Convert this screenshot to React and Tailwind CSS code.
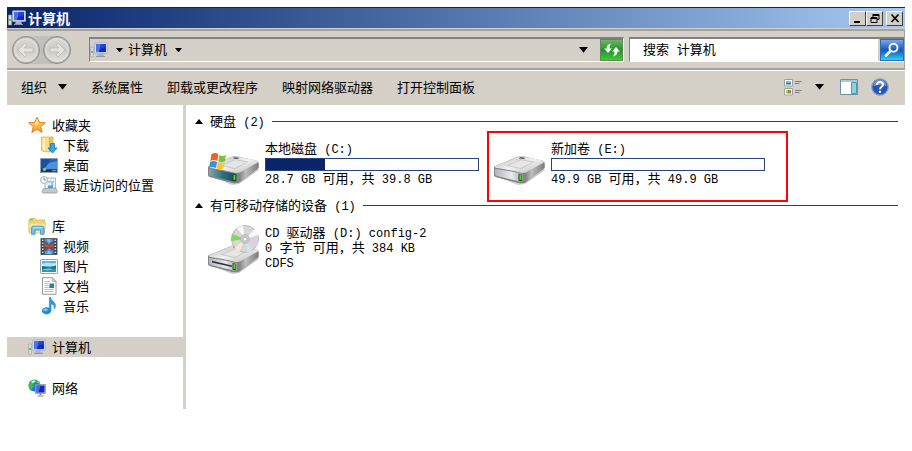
import { Fragment } from 'react';

const favorites = [
  { label: '下载', icon: DownloadsIcon },
  { label: '桌面', icon: DesktopIcon },
  { label: '最近访问的位置', icon: RecentIcon },
];

const libraries = [
  { label: '视频', icon: VideoIcon },
  { label: '图片', icon: PictureIcon },
  { label: '文档', icon: DocumentIcon },
  { label: '音乐', icon: MusicIcon },
];

const groups = [
  { label: '收藏夹', icon: StarIcon, items: favorites },
  { label: '库', icon: LibraryIcon, items: libraries },
  { label: '计算机', icon: ComputerIcon, items: [], selected: true },
  { label: '网络', icon: NetworkIcon, items: [] },
];

const commands = ['系统属性', '卸载或更改程序', '映射网络驱动器', '打开控制面板'];

const disks = [
  { name: '本地磁盘 (C:)', info: '28.7 GB 可用，共 39.8 GB', free: 28.7, total: 39.8, system: true },
  { name: '新加卷 (E:)', info: '49.9 GB 可用，共 49.9 GB', free: 49.9, total: 49.9, marked: true },
];

// Latin runs are set in a narrower mono face next to the CJK glyphs
function Mixed({ children }) {
  return children.split(/([\x20-\x7e]+)/).map((part, i) =>
    i % 2 ? (
      <span key={i} className="font-['Liberation_Mono',monospace] text-[12px] leading-none whitespace-pre">{part}</span>
    ) : (
      <Fragment key={i}>{part}</Fragment>
    )
  );
}

function Caret({ className = 'w-[8px]' }) {
  return (
    <svg viewBox="0 0 8 5" className={className} aria-hidden="true">
      <path d="M0 0h8L4 5z" fill="#000" />
    </svg>
  );
}

function ComputerIcon() {
  return (
    <svg viewBox="0 0 18 16" className="w-[18px] h-[16px]" aria-hidden="true">
      <rect x="0.5" y="5" width="3" height="10" rx="0.5" fill="#d7dbdb" stroke="#9aa0a0" strokeWidth=".6" />
      <rect x="1.2" y="9" width="1.6" height="2" fill="#39c22e" />
      <path d="M8 11h5l1 3H7z" fill="#a9b4c0" />
      <path d="M6 14h9v1H6z" fill="#8c98a5" />
      <rect x="4.5" y="0.8" width="13" height="10.7" rx="0.6" fill="#cfd8e4" stroke="#a9b3c0" strokeWidth=".7" />
      <rect x="6" y="2.1" width="10" height="8" fill="#1527bd" />
      <path d="M6 2.1h5L9 10.1H6z" fill="#4d72ee" />
      <path d="M11 2.1h5v3l-6 2z" fill="#2342d8" />
    </svg>
  );
}

function NetworkIcon() {
  return (
    <svg viewBox="0 0 18 18" className="w-[18px] h-[18px]" aria-hidden="true">
      <circle cx="6.5" cy="6.5" r="6" fill="#2577d8" />
      <path d="M1 5c1-3 3-4 6-4l1 2-3 2 1 2-2 2-1 3C1 10 .5 8 1 5z" fill="#3fbd42" />
      <path d="M8 1c2 .5 4 2 4 4L9 4z" fill="#62cf4d" />
      <path d="M3 3c2-2 4-1.500 5-1L5 4z" fill="#d9f7ff" />
      <path d="M11.500 14h2v2h-2zM9.500 16.500h6v1h-6z" fill="#6c87a8" />
      <rect x="7.500" y="5.500" width="10" height="9" fill="#b5c7de" stroke="#7c93b3" strokeWidth=".7" />
      <rect x="8.500" y="6.500" width="8" height="7" fill="#1428bd" />
      <path d="M8.500 6.500h4l-2 7h-2z" fill="#496fe8" />
    </svg>
  );
}

function StarIcon() {
  return (
    <svg viewBox="0 0 18 18" className="w-[18px] h-[18px]" aria-hidden="true">
      <defs>
        <linearGradient id="star" x1="0" y1="0" x2="0" y2="1">
          <stop offset="0" stopColor="#fff06a" />
          <stop offset="1" stopColor="#f7941f" />
        </linearGradient>
      </defs>
      <path d="M9 1l2.300 5.300 6 .5-4.600 3.800 1.500 5.900L9 13.400l-5.200 3.100 1.500-5.900L.7 6.800l6-.5z" fill="url(#star)" stroke="#e8812c" strokeWidth="1" strokeLinejoin="round" />
      <path d="M9 3l1.300 4.200L9 9 5 7.500 7.500 7z" fill="#fff7a0" opacity=".8" />
    </svg>
  );
}

function DownloadsIcon() {
  return (
    <svg viewBox="0 0 18 18" className="w-[18px] h-[18px]" aria-hidden="true">
      <path d="M1.500 1h8v15l-8-1z" fill="#f6dd86" stroke="#d9b75a" strokeWidth=".8" />
      <path d="M9.500 1H13v12l-3.500 3z" fill="#ecc766" stroke="#d0a94b" strokeWidth=".8" />
      <path d="M3 2h2v12.500l-2-.3z" fill="#fff1b8" />
      <path d="M10.500 7.500h4V12h2.500l-4.500 5-4.500-5h2.500z" fill="#3da4e8" stroke="#1b70bb" strokeWidth=".8" />
    </svg>
  );
}

function DesktopIcon() {
  return (
    <svg viewBox="0 0 18 15" className="w-[18px] h-[15px]" aria-hidden="true">
      <rect x=".5" y=".5" width="17" height="14" fill="#2563b8" stroke="#8ea2bb" />
      <path d="M1 1h10L5 11H1z" fill="#1d4e9f" />
      <path d="M9 5l8-2v8H4z" fill="#4a93dd" />
      <path d="M1 11.500h16V14H1z" fill="#263244" />
      <path d="M12 12h4.500v1.300H12z" fill="#8492a4" />
      <circle cx="4.500" cy="11.500" r="1.700" fill="#54bd7a" />
      <circle cx="4.500" cy="11.300" r=".8" fill="#f5d54b" />
    </svg>
  );
}

function RecentIcon() {
  return (
    <svg viewBox="0 0 18 18" className="w-[18px] h-[18px]" aria-hidden="true">
      <rect x="5" y="2" width="10.500" height="11" fill="#e8edf1" stroke="#a4afb8" strokeWidth=".8" />
      <path d="M7 5h7v1.500H7zM11 6h2v5h-2z" fill="#93c8e8" />
      <path d="M8 9.500h5V12H8z" fill="#4aa2dc" />
      <path d="M3.500 12.500l12-.5 2 3.500-1 1.500H3l-1-1.500z" fill="#c4cace" stroke="#939a9f" strokeWidth=".8" />
      <circle cx="4" cy="4" r="3.500" fill="#f5f7f8" stroke="#a1acb4" strokeWidth=".9" />
      <path d="M4 1.700V4h2" stroke="#697b89" strokeWidth=".8" fill="none" />
    </svg>
  );
}

function LibraryIcon() {
  return (
    <svg viewBox="0 0 18 17" className="w-[18px] h-[17px]" aria-hidden="true">
      <path d="M1 2l1-1.500h5L8 2h8.500v12H1z" fill="#f1d678" stroke="#d6b155" strokeWidth=".8" />
      <path d="M2 1.500h3v1H2z" fill="#6cc04a" />
      <path d="M.8 5h16.700L16.500 15h-15z" fill="#fae7a2" stroke="#dfc06a" strokeWidth=".7" />
      <path d="M3.500 16.300V10q0-1.800 1.800-1.800h8.900Q16 8.200 16 10v6.300h-3.500V12H7v4.300z" fill="#72c3ea" stroke="#398fca" strokeWidth=".8" />
      <path d="M5 9.300h9.500v1H5z" fill="#c9eefa" />
    </svg>
  );
}

function VideoIcon() {
  return (
    <svg viewBox="0 0 17 17" className="w-[18px] h-[17px]" aria-hidden="true">
      <rect x=".5" y=".5" width="16" height="16" fill="#29363d" stroke="#53656d" />
      <rect x="4" y="1.200" width="9" height="14.800" fill="#4d97cc" />
      <path d="M4 3q3 1 4.500 4Q10 4 13 3v10q-3-1-4.500-3Q7 13 4 13z" fill="#7a4650" />
      <path d="M4 5q3 1.500 4.500 3.500Q10 6 13 5.500v3L8.500 9.500 4 8z" fill="#c0503c" />
      <path d="M6 1.200h5L8.500 5zM6 16l2.500-4 2.500 4z" fill="#7cc5ed" />
      <path d="M2.300 1.500v15M14.700 1.500v15" stroke="#dfe8e8" strokeWidth="1.500" strokeDasharray="1.500 1.500" />
    </svg>
  );
}

function PictureIcon() {
  return (
    <svg viewBox="0 0 18 15" className="w-[18px] h-[15px]" aria-hidden="true">
      <rect x=".5" y=".5" width="17" height="14" rx=".6" fill="#fbfbfb" stroke="#98a4aa" />
      <rect x="2" y="2" width="14" height="11" fill="#53b2ec" />
      <path d="M2 5c5-3 8 0 14-1v3H2z" fill="#b5e6fb" />
      <path d="M2 7l4 1 4 .5 6-2V10H2z" fill="#286f4b" />
      <path d="M2 9.500h14V13H2z" fill="#2e91c2" />
      <path d="M2 10.500l7-1 4 1-6 1z" fill="#74cbd1" />
    </svg>
  );
}

function DocumentIcon() {
  return (
    <svg viewBox="0 0 18 18" className="w-[18px] h-[18px]" aria-hidden="true">
      <path d="M2.500.7h9.800l3.700 3.700v12.900H2.500z" fill="#fdfdfd" stroke="#949ca1" />
      <path d="M12.300.7v3.700H16z" fill="#d4dbe0" stroke="#949ca1" strokeWidth=".7" />
      <path d="M4.500 4.500H10M4.500 6.500h4M4.500 8.500h4M4.500 10.500h4M4.500 12.500h9M4.500 14.500h9" stroke="#a6b9cd" strokeWidth=".9" />
      <rect x="9.500" y="6.500" width="4.500" height="4.500" fill="#2c78bf" />
      <path d="M9.500 9.500l4.500-1V11H9.500z" fill="#328767" />
    </svg>
  );
}

function MusicIcon() {
  return (
    <svg viewBox="0 0 18 18" className="w-[18px] h-[18px]" aria-hidden="true">
      <ellipse cx="6.500" cy="13.800" rx="4.600" ry="3.600" fill="#238bd5" />
      <ellipse cx="5.500" cy="12.800" rx="2.400" ry="1.500" fill="#72c5f4" />
      <path d="M9.300 14V.5h1.500c.3 3.500 5.500 4.500 4.700 9-.2 1.200-.8 2-1.500 2.500 1-3-.8-4.500-2.900-5V14z" fill="#2f97dd" stroke="#1b77bd" strokeWidth=".4" />
    </svg>
  );
}

function DriveBody({ y = 0, slot, system }) {
  return (
    <g transform={`translate(0 ${y})`}>
      <path d="M3 21l22 9 7-1 20-14-2-2z" fill="#000" opacity=".2" />
      <path d="M1 11.500L24 2q3-1 7-.5l18 4q2.500.5 2.500 2.500v5L33 27q-3 2-7 1L3 22q-2-.5-2-3z" fill="#8d8d8d" />
      <path d="M30 17.500L51.500 7.500V13L32.500 27.200l-2.500.6z" fill="url(#driveSide)" />
      <path d="M1.500 11.500L24 2q3-1 7-.5l18.500 4q2.500 1 .5 2.500L33 17.500q-3 1.200-7 .3L3 13z" fill="url(#driveTop)" />
      <path d="M13 10.500l15-6.500 14 2.500-14 8z" fill="#cbcbcb" />
      <path d="M16 10.200l12-4.900 11.500 2L27.500 13z" fill="#e6e6e6" />
      <path d="M27 2.200l5.500.5-2 1.400-4.500-.5z" fill="#535353" />
      <path d="M1 12.700q13 1.300 28 5.300l3-.3v9.600q-3 1.400-6 .7L3 22q-2-.5-2-2.500z" fill="#858585" />
      <path d="M2 14q13 1.300 27.500 5v7.300q-1.500.6-4 0L4 21q-2-.5-2-2.500z" fill={system ? 'url(#glassFront)' : 'url(#driveFront)'} />
      {slot && <path d="M5 16.800l20 4.700v1.500L5 18.500z" fill="#30343c" />}
      <path d="M25.500 19l3.300.8v6.500l-3.300-.5z" fill="#234b1e" />
      <path d="M26.500 19.800l1.800.4V25l-1.800-.3z" fill="#4be323" />
    </g>
  );
}

function DriveDefs() {
  return (
    <defs>
      <linearGradient id="driveTop" x1="0" y1="0" x2="1" y2="1">
        <stop offset="0" stopColor="#b0b0b0" />
        <stop offset=".5" stopColor="#f2f2f2" />
        <stop offset="1" stopColor="#b5b5b5" />
      </linearGradient>
      <linearGradient id="driveSide" x1="0" y1="0" x2="1" y2="0">
        <stop offset="0" stopColor="#6c6c6c" />
        <stop offset=".4" stopColor="#bdbdbd" />
        <stop offset="1" stopColor="#7c7c7c" />
      </linearGradient>
      <linearGradient id="driveFront" x1="0" y1="0" x2="1" y2="0">
        <stop offset="0" stopColor="#b2b5bb" />
        <stop offset=".6" stopColor="#e9eaf0" />
        <stop offset="1" stopColor="#a6a9ae" />
      </linearGradient>
      <linearGradient id="glassFront" x1="0" y1="0" x2="1" y2="0">
        <stop offset="0" stopColor="#87a5ab" />
        <stop offset=".5" stopColor="#2d7080" />
        <stop offset="1" stopColor="#164958" />
      </linearGradient>
    </defs>
  );
}

function DiskIcon({ system }) {
  return (
    <svg viewBox="0 0 52 32" className="w-[52px] h-[32px]" aria-hidden="true">
      <DriveDefs />
      <DriveBody y={2} system={system} />
      {system && (
        <g>
          <path d="M4.500 1q4-2 7 .3L10.300 8Q7 6 3.300 8z" fill="#ec6328" />
          <path d="M12.500 2q3 2 6.500 0l-1.200 6.200q-3.500 2-6.500 0z" fill="#7cc043" />
          <path d="M3 9q3.800-2 7 0L8.800 15Q5.500 13 2 15z" fill="#3b92dc" />
          <path d="M11 9.200q3.200 2 6.600 0L16.400 15.500q-3.500 2-6.600 0z" fill="#fac62e" />
        </g>
      )}
    </svg>
  );
}

function OpticalIcon() {
  return (
    <svg viewBox="0 0 52 49" className="w-[52px] h-[49px]" aria-hidden="true">
      <DriveDefs />
      <DriveBody y={19} slot />
      <circle cx="38" cy="14" r="13.500" fill="#d6d6d6" stroke="#b0b0b0" strokeWidth=".8" />
      <path d="M38 14L25 9q-1 3-.8 7z" fill="#7fdc5a" />
      <path d="M38 14L30 2.800 36 .6z" fill="#f8f8f8" />
      <path d="M38 14L48 4q3 3 3.500 6z" fill="#f9f9f9" />
      <path d="M38 14l13.500 2q-.5 3-2 5z" fill="#e3c9ea" />
      <path d="M38 14l-10.500 9q2 2.500 5 4z" fill="#f3ebd0" />
      <path d="M38 14l2 13.500 5-1.500z" fill="#cfe5ef" />
      <circle cx="38" cy="14" r="4.500" fill="#c9c9c9" stroke="#adadad" strokeWidth=".6" />
      <circle cx="38" cy="14" r="2" fill="#fff" stroke="#9c9c9c" strokeWidth=".6" />
    </svg>
  );
}

function TravelButtons() {
  return (
    <div className="flex shrink-0 gap-[3px] rounded-full bg-[#c3c0b9]">
      {['后退', '前进'].map((label, i) => (
        <button key={label} aria-label={label} className="grid h-[28px] w-[28px] place-items-center rounded-full border border-[#8b8f91] bg-linear-to-b from-[#dcdad5] via-[#cdcbc5] to-[#e4e2dd] shadow-[inset_0_0_0_1px_#b4b5b3,inset_0_0_2px_2px_#e6e5e2]">
          <svg viewBox="0 0 18 16" className={i ? 'w-[18px] rotate-180' : 'w-[18px]'} aria-hidden="true">
            <path d="M8 1L1 8l7 7 2-2-3-3h9V6H7l3-3z" fill="#e4e3df" stroke="#bab8b3" strokeWidth=".8" />
          </svg>
        </button>
      ))}
    </div>
  );
}

function TitleButton({ label, children }) {
  return (
    <button aria-label={label} className="grid h-[15px] w-[17px] place-items-center border border-t-white border-l-white border-r-[#404040] border-b-[#404040] bg-[#d4d0c8]">
      <svg viewBox="0 0 12 11" className="h-[11px] w-[12px]" fill="none" stroke="#000" aria-hidden="true">{children}</svg>
    </button>
  );
}

function TitleBar() {
  return (
    <header className="flex h-[21px] items-center border-t border-[#20262f] bg-linear-to-r from-[#0a246a] to-[#a6caf0] pr-[2px] pl-px">
      <ComputerIcon />
      <h1 className="ml-[2px] text-[14px] font-bold text-white">计算机</h1>
      <div className="ml-auto flex">
        <TitleButton label="最小化"><path d="M2 9h6" strokeWidth="2" /></TitleButton>
        <TitleButton label="还原"><path d="M4 1.500h6v5H8M4 2.500h6M4 1v3M2 4.500h6v5H2zM2 5.500h6" /></TitleButton>
        <span className="w-[3px]" />
        <TitleButton label="关闭"><path d="M2.500 1.500l7 7.500M9.500 1.500l-7 7.500" strokeWidth="1.700" /></TitleButton>
      </div>
    </header>
  );
}

function AddressBar() {
  return (
    <div className="mt-px flex h-[41px] items-center border-t-2 border-r border-b-2 border-[#a3a3a3] pl-[5px]">
      <TravelButtons />
      <nav aria-label="地址" className="ml-[18px] flex h-[25px] flex-1 items-center border border-t-2 border-t-[#808080] border-r-white border-b-white border-l-[#808080]">
        <ComputerIcon />
        <button aria-label="根位置" className="pr-[5px] pl-[8px]"><Caret className="w-[7px]" /></button>
        <a href="#computer" className="pb-[2px]">计算机</a>
        <button aria-label="计算机位置" className="px-[8px]"><Caret className="w-[7px]" /></button>
        <button aria-label="以前的位置" className="ml-auto px-[12px]"><Caret className="w-[9px]" /></button>
        <button aria-label="刷新" className="grid h-[22px] w-[23px] place-items-center border border-[#5c8c55] bg-linear-to-b from-[#69b765] via-[#23922b] to-[#42cb35]">
          <svg viewBox="0 0 18 16" className="w-[18px]" aria-hidden="true">
            <path d="M8 1.500Q3.500 2.500 3.500 6.500H1L5 11l4-4.500H6.500Q6.300 4 8 1.500zM10 14.500q4.500-1 4.500-5H17L13 5 9 9.500h2.500q.2 2.500-1.500 5z" fill="#f3fff0" />
          </svg>
        </button>
      </nav>
      <form role="search" className="ml-[5px] flex h-[25px] w-[275px] items-center border border-r-0 border-t-2 border-[#808080] border-b-white" onSubmit={(e) => e.preventDefault()}>
        <input
          type="text"
          aria-label="搜索 计算机"
          placeholder="搜索 计算机"
          className="h-full min-w-0 flex-1 bg-white pl-[13px] font-['Liberation_Mono','Noto_Sans_CJK_SC',monospace] text-[13px] outline-none placeholder:text-black"
        />
        <button aria-label="搜索" className="ml-[2px] grid h-[22px] w-[24px] place-items-center border border-[#2f6db0] bg-linear-to-b from-[#77a8e6] via-[#1855bd] to-[#33d1f2]">
          <svg viewBox="0 0 16 16" className="w-[16px]" fill="none" stroke="#f4f8fc" aria-hidden="true">
            <circle cx="9.500" cy="5.800" r="4" strokeWidth="2" />
            <path d="M6.500 9L2 13.500" strokeWidth="2.800" strokeLinecap="round" />
          </svg>
        </button>
      </form>
    </div>
  );
}

function CommandBar() {
  return (
    <div role="toolbar" aria-label="命令" className="flex h-[35px] items-center border-t border-white pr-[16px] pb-[2px] pl-[14px]">
      <button className="mr-[24px] flex items-center gap-[11px]">组织<Caret className="w-[9px]" /></button>
      <div className="flex gap-[24px]">
        {commands.map((c) => <button key={c} className="whitespace-nowrap">{c}</button>)}
      </div>
      <div className="ml-auto flex items-center">
        <button aria-label="更改视图">
          <svg viewBox="0 0 18 17" className="w-[18px]" aria-hidden="true">
            <path d="M.5.500h8v6.500h-8zM.5 9.500h8V16h-8z" fill="#fff" stroke="#9aa2a8" />
            <path d="M2 2h5v2.500H2z" fill="#76bde2" />
            <path d="M2 4h5v1.500H2z" fill="#2d7b62" />
            <path d="M2 11h2v3.500H2z" fill="#e2b72a" />
            <path d="M4 11h1.500v3.500H4z" fill="#449e48" />
            <path d="M5.500 11H7v3.500H5.500z" fill="#b65a43" />
            <path d="M11 2.500h6.500M11 4.500h4.500M11 11.500h6.500M11 13.500h4.500" stroke="#78838e" />
          </svg>
        </button>
        <button aria-label="更多选项" className="pr-[16px] pl-[13px]"><Caret className="w-[9px]" /></button>
        <button aria-label="显示预览窗格">
          <svg viewBox="0 0 18 16" className="w-[18px]" aria-hidden="true">
            <path d="M.5.500h17v15H.5z" fill="#fff" stroke="#6b93a8" />
            <path d="M1 1h16v2H1z" fill="#a9c9d8" />
            <path d="M11.500 3.500h5v11h-5z" fill="#8fd0e4" stroke="#4d97b4" />
          </svg>
        </button>
        <button aria-label="获取帮助" className="ml-[13px]">
          <svg viewBox="0 0 18 18" className="w-[18px]" aria-hidden="true">
            <circle cx="9" cy="9" r="8.200" fill="#2453ba" stroke="#8d9db8" strokeWidth="1.200" />
            <path d="M2.500 8a6.500 6.500 0 0 1 13 0q-6-2-13 0z" fill="#6b94e3" />
            <path d="M6 7q0-3 3-3t3 2.600q0 1.400-1.500 2.300T9 11.300" fill="none" stroke="#fff" strokeWidth="1.900" />
            <circle cx="9" cy="13.700" r="1.200" fill="#fff" />
          </svg>
        </button>
      </div>
    </div>
  );
}

function Sidebar() {
  return (
    <nav aria-label="导航窗格" className="flex w-[179px] shrink-0 flex-col gap-[21px] border-r-[3px] border-[#d4d0c8] pt-[10px] pb-[11px]">
      {groups.map((g) => (
        <section key={g.label}>
          <a href={`#${g.label}`} className={g.selected ? 'flex h-[20px] items-center gap-[6px] bg-[#d4d0c8] pl-[21px]' : 'flex h-[20px] items-center gap-[6px] pl-[21px]'}>
            <g.icon />
            {g.label}
          </a>
          {g.items.map((item) => (
            <a key={item.label} href={`#${item.label}`} className="flex h-[20px] items-center gap-[5px] pl-[33px]">
              <item.icon />
              {item.label}
            </a>
          ))}
        </section>
      ))}
    </nav>
  );
}

function GroupHeading({ children }) {
  return (
    <h2 className="flex h-[20px] items-center gap-[7px] pl-[9px]">
      <svg viewBox="0 0 8 5" className="w-[8px]" aria-hidden="true"><path d="M0 5h8L4 0z" fill="#000" /></svg>
      <span className="whitespace-nowrap"><Mixed>{children}</Mixed></span>
      <span className="h-px flex-1 bg-[#3c3c3c]" />
    </h2>
  );
}

function Disk({ disk }) {
  const used = (1 - disk.free / disk.total) * 100;

  return (
    <article className="relative flex gap-[6px]">
      <div className="mt-[15px] shrink-0"><DiskIcon system={disk.system} /></div>
      <div className="w-[214px]">
        <h3 className="h-[20px] leading-[20px]"><Mixed>{disk.name}</Mixed></h3>
        <div role="progressbar" aria-label={disk.name} aria-valuenow={Math.round(used)} className="h-[13px] border border-[#26427f] bg-white">
          <div className="h-full bg-[#0a246a]" style={{ width: `${used}%` }} />
        </div>
        <p className="h-[14px] leading-[14px] whitespace-nowrap"><Mixed>{disk.info}</Mixed></p>
      </div>
      {disk.marked && <div className="pointer-events-none absolute -top-[7px] -left-[6px] h-[71px] w-[301px] border-2 border-[#fa0505]" />}
    </article>
  );
}

export default function App() {
  return (
    <div className="min-h-screen bg-white p-[7px] font-['Noto_Sans_CJK_SC',sans-serif] text-[13px] leading-[20px] text-black">
      <div className="bg-[#d4d0c8]">
        <TitleBar />
        <AddressBar />
        <CommandBar />
        <div className="flex bg-white">
          <Sidebar />
          <main className="min-w-0 flex-1 pt-[6px] pr-[7px]">
            <GroupHeading>硬盘 (2)</GroupHeading>
            <div className="mt-[7px] grid grid-cols-[286px_286px] pl-[21px]">
              {disks.map((d) => <Disk key={d.name} disk={d} />)}
            </div>
            <div className="mt-[10px]">
              <GroupHeading>有可移动存储的设备 (1)</GroupHeading>
            </div>
            <article className="mt-[10px] flex gap-[6px] pl-[21px]">
              <OpticalIcon />
              <div className="leading-[14px]">
                <h3><Mixed>CD 驱动器 (D:) config-2</Mixed></h3>
                <p><Mixed>0 字节 可用，共 384 KB</Mixed></p>
                <p><Mixed>CDFS</Mixed></p>
              </div>
            </article>
          </main>
        </div>
      </div>
    </div>
  );
}
